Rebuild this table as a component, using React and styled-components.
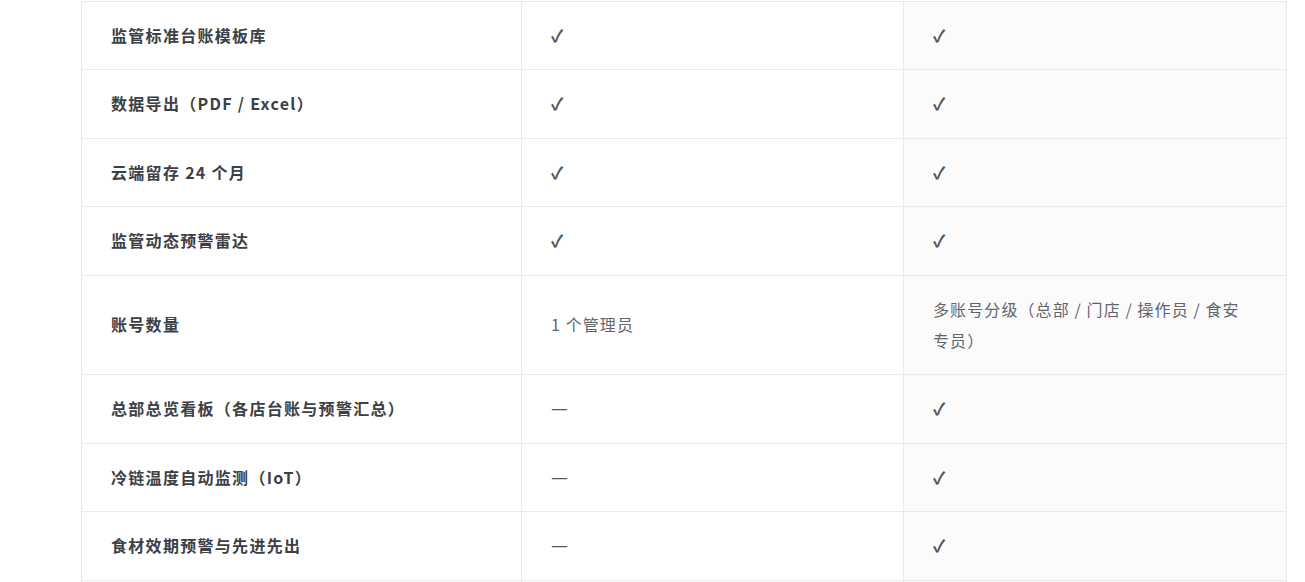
import styled, { createGlobalStyle } from "styled-components";

const GlobalStyle = createGlobalStyle`
  html, body {
    margin: 0;
    padding: 0;
    background: #ffffff;
  }
  body {
    font-family: "Noto Sans CJK SC", "Noto Sans", sans-serif;
  }
`;

const Page = styled.div`
  padding: 1px 0 0 81px;
  width: 1305px;
  height: 582px;
  box-sizing: border-box;
  overflow: hidden;
`;

const Table = styled.table`
  width: 1205px;
  border-collapse: collapse;
  table-layout: fixed;
  font-size: 16px;
  line-height: 31.4px;
`;

const Row = styled.tr`
  border-top: 1px solid #e9eaec;
`;

const Cell = styled.td`
  padding: 18px 32px 18px 29px;
  border-left: 1px solid #e9eaec;
  border-right: 1px solid #e9eaec;
  vertical-align: middle;
  color: ${(p) => (p.$feature ? "#3b4046" : "#62666b")};
  font-weight: ${(p) => (p.$feature ? 700 : 400)};
  background: ${(p) => (p.$shade ? "#fbfbfc" : "#ffffff")};
  letter-spacing: ${(p) => (p.$feature ? "1.3px" : "1.1px")};
`;

const Mark = styled.span`
  color: #52575d;
  font-size: ${(p) => (p.$dash ? "19px" : "17px")};
  font-weight: ${(p) => (p.$dash ? 400 : 700)};
  line-height: 1;
  letter-spacing: 0;
`;

const rows = [
  ["监管标准台账模板库", "✓", "✓"],
  ["数据导出（PDF / Excel）", "✓", "✓"],
  ["云端留存 24 个月", "✓", "✓"],
  ["监管动态预警雷达", "✓", "✓"],
  ["账号数量", "1 个管理员", "多账号分级（总部 / 门店 / 操作员 / 食安专员）"],
  ["总部总览看板（各店台账与预警汇总）", "—", "✓"],
  ["冷链温度自动监测（IoT）", "—", "✓"],
  ["食材效期预警与先进先出", "—", "✓"],
  ["", "", ""],
];

const renderValue = (v) => {
  if (v === "✓") return <Mark>{v}</Mark>;
  if (v === "—") return <Mark $dash>{v}</Mark>;
  return v;
};

export default function App() {
  return (
    <>
      <GlobalStyle />
      <Page>
        <Table>
          <colgroup>
            <col style={{ width: 440 }} />
            <col style={{ width: 382 }} />
            <col style={{ width: 383 }} />
          </colgroup>
          <tbody>
            {rows.map(([feature, basic, pro], i) => (
              <Row key={i}>
                <Cell $feature>{feature}</Cell>
                <Cell>{renderValue(basic)}</Cell>
                <Cell $shade>{renderValue(pro)}</Cell>
              </Row>
            ))}
          </tbody>
        </Table>
      </Page>
    </>
  );
}
